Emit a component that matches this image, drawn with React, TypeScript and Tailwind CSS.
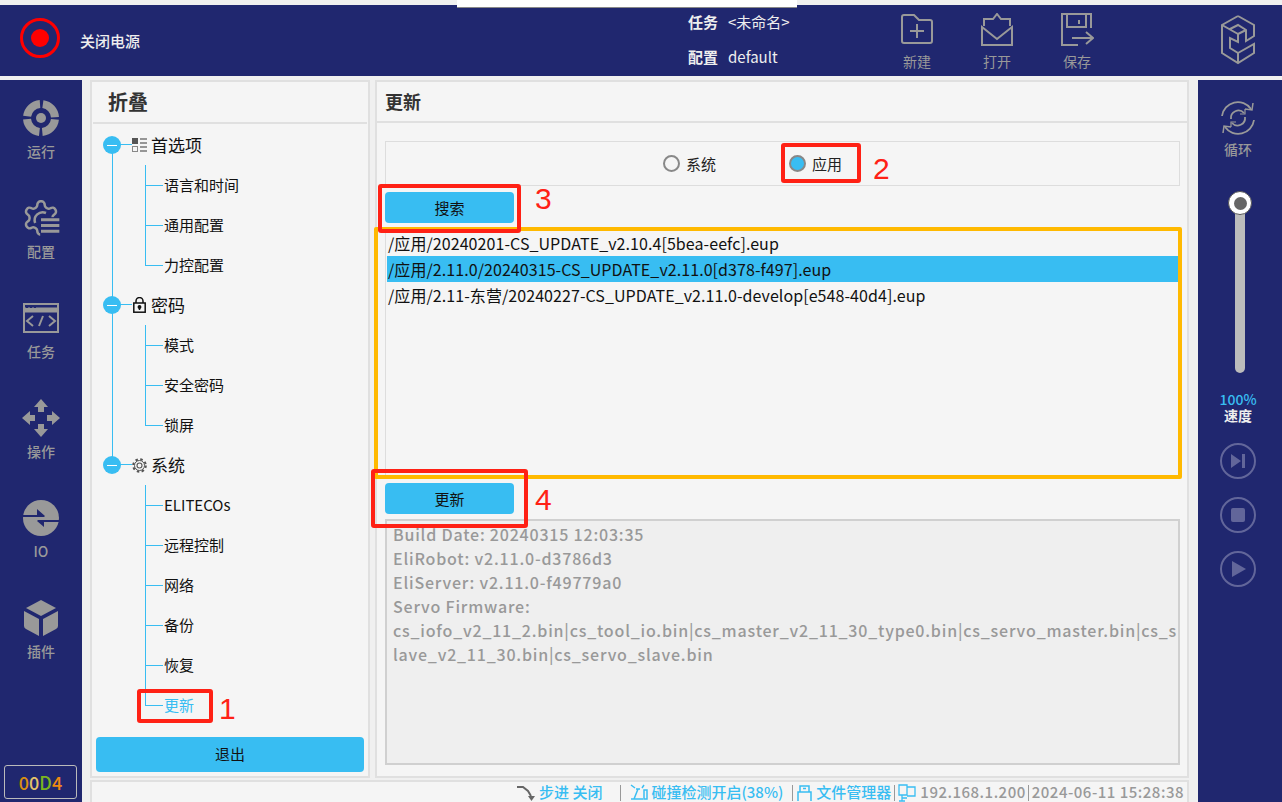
const navy = 'bg-[#20276f]'

const Sun = 'font-["Noto_Sans_CJK_SC",sans-serif]'

const NavIcon = ({ name }: { name: string }) => {
    if (name === 'run') {
        return (
            <svg width="38" height="38" viewBox="0 0 38 38" fill="#999">
                <circle cx="19" cy="19" r="5" />
                <circle cx="19" cy="19" r="14" fill="none" stroke="#999" strokeWidth="8" strokeDasharray="19 3" strokeDashoffset="-1.500" />
            </svg>
        )
    }
    if (name === 'config') {
        return (
            <svg width="40" height="40" viewBox="0 0 24 24" fill="none" stroke="#999" strokeWidth="1.500">
                <path d="M12.220 2h-.44a2 2 0 0 0-2 2v.18a2 2 0 0 1-1 1.730l-.43.25a2 2 0 0 1-2 0l-.15-.08a2 2 0 0 0-2.730.73l-.22.38a2 2 0 0 0 .73 2.730l.15.1a2 2 0 0 1 1 1.720v.51a2 2 0 0 1-1 1.740l-.15.09a2 2 0 0 0-.73 2.730l.22.38a2 2 0 0 0 2.730.73l.15-.08a2 2 0 0 1 2 0l.43.25a2 2 0 0 1 1 1.730V20a2 2 0 0 0 2 2h.44a2 2 0 0 0 2-2v-.18a2 2 0 0 1 1-1.730l.43-.25a2 2 0 0 1 2 0l.15.08a2 2 0 0 0 2.730-.73l.22-.39a2 2 0 0 0-.73-2.730l-.15-.08a2 2 0 0 1-1-1.740v-.5a2 2 0 0 1 1-1.740l.15-.09a2 2 0 0 0 .73-2.730l-.22-.38a2 2 0 0 0-2.730-.73l-.15.08a2 2 0 0 1-2 0l-.43-.25a2 2 0 0 1-1-1.730V4a2 2 0 0 0-2-2z" />
                <rect x="11.500" y="11.500" width="13" height="13" fill="#20276f" stroke="none" />
                <path d="M8.500 15a4.800 4.800 0 0 1 6.500-6" />
                <path d="M12 13h11M12 16.500h11M12 20h11" strokeWidth="1.800" />
            </svg>
        )
    }
    if (name === 'task') {
        return (
            <svg width="36" height="30" viewBox="0 0 36 30" fill="none" stroke="#999" strokeWidth="2">
                <rect x="1" y="1" width="34" height="28" />
                <path d="M1 7h34" strokeWidth="5" />
                <path d="M10 13l-6 5 6 5M26 13l6 5-6 5M20 13l-4 10" />
                <path d="M3 4h2M7 4h2M11 4h2" stroke="#20276f" strokeWidth="2" />
            </svg>
        )
    }
    if (name === 'op') {
        return (
            <svg width="38" height="38" viewBox="0 0 38 38" fill="#999">
                <path d="M19 0l7 8h-4v5h-6V8h-4zM19 38l-7-8h4v-5h6v5h4zM0 19l8-7v4h5v6H8v4zM38 19l-8 7v-4h-5v-6h5v-4z" />
            </svg>
        )
    }
    if (name === 'io') {
        return (
            <svg width="36" height="36" viewBox="0 0 36 36">
                <circle cx="18" cy="18" r="18" fill="#999" />
                <path d="M0 15h14V9l8 7-1 1H0z" fill="#20276f" />
                <path d="M36 20H15l-1 1 7 6v-5h15z" fill="#20276f" />
            </svg>
        )
    }
    return (
        <svg width="36" height="38" viewBox="0 0 36 38" fill="#999">
            <path d="M18 1l15 8-15 8-15-8z" />
            <path d="M1 12l15 8v17L3 30q-2-1-2-3z" />
            <path d="M35 12l-15 8v17l13-7q2-1 2-3z" />
        </svg>
    )
}

const navItems = [
    { name: 'run', label: '运行' },
    { name: 'config', label: '配置' },
    { name: 'task', label: '任务' },
    { name: 'op', label: '操作' },
    { name: 'io', label: 'IO' },
    { name: 'plug', label: '插件' },
]

const LeftNav = () => (
    <div className={`${navy} w-[82px] flex flex-col relative`}>
        <div className="pt-[18px] flex flex-col">
            {navItems.map((v, i) => (
                <div key={i} className="h-[100px] flex flex-col items-center">
                    <div className="h-[40px] w-full flex items-center justify-center"><NavIcon name={v.name} /></div>
                    <div className="text-[14px] font-medium leading-[18px] mt-[4px] text-[#999]">{v.label}</div>
                </div>
            ))}
        </div>
        <div className="mt-auto mb-[3px] ml-[4px] w-[73px] h-[34px] border border-[#bbb] rounded-[3px] flex items-center justify-center text-[18px] font-medium">
            <span className="text-[#d9900f]">0</span>
            <span className="text-[#e5c36a]">0</span>
            <span className="text-[#7ab51d]">D</span>
            <span className="text-[#ee8a10]">4</span>
        </div>
    </div>
)

const ToolIcon = ({ name }: { name: string }) => {
    if (name === 'new') {
        return (
            <svg width="32" height="30" viewBox="0 0 32 30" fill="none" stroke="#999" strokeWidth="2" className="mt-[1px]">
                <path d="M1 27V3q0-2 2-2h10l5 5h11q2 0 2 2v19q0 2-2 2H3q-2 0-2-2z" />
                <path d="M16 10v14M9 17h14" />
            </svg>
        )
    }
    if (name === 'open') {
        return (
            <svg width="32" height="33" viewBox="0 0 32 33" fill="none" stroke="#999" strokeWidth="2">
                <path d="M1 14l15 12 15-12v18H1z" />
                <path d="M3 13V6h9l4-5 4 5h9v7" />
            </svg>
        )
    }
    return (
        <svg width="33" height="33" viewBox="0 0 33 33" fill="none" stroke="#999" strokeWidth="2">
            <path d="M30 15V1H1v31h16" />
            <path d="M6 1v13h19V1" />
            <path d="M18 7v4" />
            <path d="M11 25h21M25 19l7 6-7 6" />
        </svg>
    )
}

const Header = () => (
    <div className={`${navy} mt-[5px] h-[71px] flex items-center relative shrink-0`}>
        <div className="ml-[20px] w-[40px] h-[40px] rounded-full border-[3px] border-[#ff0000] flex items-center justify-center -mt-[5px]">
            <div className="w-[18px] h-[18px] rounded-full bg-[#ff0000]" />
        </div>
        <div className="ml-[20px] text-[15px] font-medium text-[#eee] mt-[1px]">关闭电源</div>
        <div className="ml-[548px] flex flex-col gap-[13px] text-[#eee] -mt-[1px]">
            <div className="flex items-center h-[22px]">
                <span className="text-[15px] font-bold w-[40px]">任务</span>
                <span className="text-[15px]">&lt;未命名&gt;</span>
            </div>
            <div className="flex items-center h-[22px]">
                <span className="text-[15px] font-bold w-[40px]">配置</span>
                <span className="text-[15px]">default</span>
            </div>
        </div>
        <div className="absolute left-[877px] top-[8px] flex">
            {[
                { name: 'new', txt: '新建' },
                { name: 'open', txt: '打开' },
                { name: 'save', txt: '保存' },
            ].map((v, i) => (
                <div key={i} className="w-[80px] flex flex-col items-center">
                    <div className="h-[33px] flex items-start"><ToolIcon name={v.name} /></div>
                    <div className="mt-[6px] text-[14px] leading-[18px] text-[#999]">{v.txt}</div>
                </div>
            ))}
        </div>
        <div className="ml-auto mr-[26px] -mt-[1px]">
            <svg width="36" height="50" viewBox="0 0 36 50" fill="none" stroke="#999" strokeWidth="2">
                <path d="M18 1L2 10v28l16 10 16-10v-9L18 38" />
                <path d="M2 10l16 9v8l-8-4v10l8 5v10M18 1l16 9v11l-8 5V15l-8-5-8 4M18 19l8-4" />
            </svg>
        </div>
    </div>
)

const Dot = () => (
    <div className="absolute left-[11px] top-[11px] w-[18px] h-[18px] rounded-full bg-[#38bdf2] flex items-center justify-center z-10">
        <div className="w-[10px] h-px bg-white" />
    </div>
)

const TreeGroup = ({ icon, txt }: { icon: React.ReactNode; txt: string }) => (
    <div className="h-10 relative flex items-center">
        <Dot />
        <div className="absolute left-[28px] top-[19px] w-[12px] h-px bg-[#38bdf2]" />
        <div className="ml-[37px] w-[20px] flex justify-center">{icon}</div>
        <span className="text-[17px] text-[#111] ml-[2px]">{txt}</span>
    </div>
)

const TreeLeaf = ({ txt, active, last }: { txt: string; active?: boolean; last?: boolean }) => (
    <div className="h-10 relative flex items-center">
        <div className={`absolute left-[53px] top-0 w-px bg-[#38bdf2] ${last ? 'h-[21px]' : 'h-full'}`} />
        <div className="absolute left-[53px] top-[20px] w-[18px] h-px bg-[#38bdf2]" />
        <span className={`ml-[72px] text-[15px] ${active ? 'text-[#38bdf2]' : 'text-[#111]'}`}>{txt}</span>
    </div>
)

const TreePanel = () => (
    <div className="w-[280px] shrink-0 bg-[#f5f5f5] border-2 border-[#e0e0e0] flex flex-col">
        <div className="h-[42px] mx-px border-b-2 border-[#e0e0e0] flex items-center pl-[15px] text-[20px] font-bold text-[#333]">折叠</div>
        <div className="relative pt-[1px]">
            <div className="absolute left-[20px] top-[20px] w-px h-[321px] bg-[#38bdf2]" />
            <TreeGroup
                txt="首选项"
                icon={
                    <svg width="15" height="14" viewBox="0 0 15 14" fill="none">
                        <rect x="0" y="0" width="6" height="6" fill="#555" />
                        <rect x=".5" y="8.500" width="5" height="5" stroke="#888" />
                        <path d="M8 1h7M8 5h7M8 9h7M8 13h7" stroke="#777" strokeWidth="1.500" />
                    </svg>
                }
            />
            <TreeLeaf txt="语言和时间" />
            <TreeLeaf txt="通用配置" />
            <TreeLeaf txt="力控配置" last />
            <TreeGroup
                txt="密码"
                icon={
                    <svg width="13" height="16" viewBox="0 0 13 16" fill="none" stroke="#111" strokeWidth="1.500">
                        <rect x=".8" y="6" width="11.400" height="9.200" />
                        <path d="M3 6V4a3.500 3.500 0 0 1 7 0v2" />
                        <circle cx="6.500" cy="10" r="1.200" fill="#111" />
                        <path d="M6.500 10v3" />
                    </svg>
                }
            />
            <TreeLeaf txt="模式" />
            <TreeLeaf txt="安全密码" />
            <TreeLeaf txt="锁屏" last />
            <TreeGroup
                txt="系统"
                icon={
                    <svg width="15" height="15" viewBox="0 0 15 15" fill="none" stroke="#555" strokeWidth="1.100">
                        <circle cx="7.500" cy="7.500" r="2.500" />
                        <circle cx="7.500" cy="7.500" r="5" strokeWidth="1" />
                        <circle cx="7.500" cy="7.500" r="6.300" strokeDasharray="2.500 2.450" strokeWidth="2" />
                    </svg>
                }
            />
            <TreeLeaf txt="ELITECOs" />
            <TreeLeaf txt="远程控制" />
            <TreeLeaf txt="网络" />
            <TreeLeaf txt="备份" />
            <TreeLeaf txt="恢复" />
            <TreeLeaf txt="更新" active last />
        </div>
        <button className="mt-auto mb-[4px] mx-[4px] h-[35px] rounded-[4px] bg-[#38bdf2] text-[15px] text-[#111]">退出</button>
    </div>
)

const Radio = ({ on, txt }: { on?: boolean; txt: string }) => (
    <div className="flex items-center">
        <div className={`w-[17px] h-[17px] rounded-full border-2 border-[#888] ${on ? 'bg-[#38bdf2]' : 'bg-[#f5f5f5]'}`} />
        <span className="ml-[6px] text-[15px] text-[#222] pt-[2px]">{txt}</span>
    </div>
)

const files = [
    '/应用/20240201-CS_UPDATE_v2.10.4[5bea-eefc].eup',
    '/应用/2.11.0/20240315-CS_UPDATE_v2.11.0[d378-f497].eup',
    '/应用/2.11-东营/20240227-CS_UPDATE_v2.11.0-develop[e548-40d4].eup',
]

const infoLines = [
    'Build Date: 20240315 12:03:35',
    'EliRobot: v2.11.0-d3786d3',
    'EliServer: v2.11.0-f49779a0',
    'Servo Firmware:',
    'cs_iofo_v2_11_2.bin|cs_tool_io.bin|cs_master_v2_11_30_type0.bin|cs_servo_master.bin|cs_s',
    'lave_v2_11_30.bin|cs_servo_slave.bin',
]

const ContentPanel = () => (
    <div className="w-[814px] ml-[5px] bg-[#f5f5f5] border-2 border-[#e0e0e0] flex flex-col">
        <div className="h-[41px] border-b-2 border-[#e0e0e0] flex items-center pl-[8px] text-[18px] font-bold text-[#333]">更新</div>
        <div className="pl-[8px] pr-[7px] pt-[18px] flex flex-col">
            <div className="h-[45px] border border-[#ddd] flex items-center">
                <div className="ml-[277px]"><Radio txt="系统" /></div>
                <div className="ml-[73px]"><Radio on txt="应用" /></div>
            </div>
            <button className="mt-[6px] w-[129px] h-[31px] pt-px rounded-[4px] bg-[#38bdf2] text-[15px] text-[#111]">搜索</button>
            <div className="mt-[5px] h-[250px] border border-[#ddd] pt-px pl-px pr-px">
                {files.map((v, i) => (
                    <div key={i} className={`h-[26px] pl-[1px] flex items-center text-[16px] tracking-[0.07px] whitespace-nowrap text-[#111] ${i === 1 ? 'bg-[#38bdf2]' : ''}`}>{v}</div>
                ))}
            </div>
            <button className="mt-[5px] w-[129px] h-[31px] pt-px rounded-[4px] bg-[#38bdf2] text-[15px] text-[#111]">更新</button>
            <div className="mt-[5px] h-[246px] border-2 border-[#d0d0d0] bg-[#efefef] pl-[6px] pt-px text-[16px] leading-[24px] text-[#999] font-medium tracking-[0.8px] whitespace-nowrap overflow-hidden">
                {infoLines.map((v, i) => (
                    <div key={i}>{v}</div>
                ))}
            </div>
        </div>
    </div>
)

const Sep = () => <div className="w-px h-[16px] bg-[#999]" />

const StatusBar = () => (
    <div className="mt-[2px] h-[22px] w-[1099px] bg-[#f5f5f5] border-t-2 border-l-2 border-r-2 border-[#e0e0e0] flex items-center justify-end text-[15px] font-medium text-[#38bdf2] pr-[3px] pt-px whitespace-nowrap">
        <svg width="18" height="18" viewBox="0 0 18 18" fill="none" stroke="#666" strokeWidth="2">
            <path d="M0 3h6l5 4 3 5" />
            <path d="M11 12h7l-3.500 5z" fill="#666" stroke="none" />
        </svg>
        <span className="ml-[4px]">步进 关闭</span>
        <div className="ml-[18px] mr-[9px]"><Sep /></div>
        <svg width="18" height="17" viewBox="0 0 18 17" fill="none" stroke="#38bdf2" strokeWidth="1.500">
            <path d="M1 1l4 3M14 1l-2 3M1 15h12M4 15l4-10M6 5h4" />
            <rect x="14" y="6" width="3" height="9" />
        </svg>
        <span className="ml-[3px]">碰撞检测开启(38%)</span>
        <div className="ml-[9px] mr-[4px]"><Sep /></div>
        <svg width="15" height="16" viewBox="0 0 15 16" fill="none" stroke="#38bdf2" strokeWidth="1.500">
            <path d="M1 16V7h13v9M3 7V1h9v6M6 3.500h3" />
        </svg>
        <span className="ml-[4px]">文件管理器</span>
        <div className="ml-[3px] mr-[3px]"><Sep /></div>
        <svg width="18" height="18" viewBox="0 0 18 18" fill="none" stroke="#38bdf2" strokeWidth="1.300">
            <path d="M1 1h8v10H1zM9 3h8v9H9M4 11v6M1 17h6M4 14h5" />
        </svg>
        <span className="ml-[4px] text-[#999] tracking-[0.5px]">192.168.1.200</span>
        <div className="ml-[2px] mr-[3px]"><Sep /></div>
        <span className="text-[#999] tracking-[0.5px]">2024-06-11 15:28:38</span>
    </div>
)

const RightBar = () => (
    <div className={`${navy} ml-[9px] w-[84px] flex flex-col items-center pt-[20px]`}>
        <svg width="36" height="36" viewBox="0 0 36 36" fill="none" stroke="#999" strokeWidth="1.800" className="-ml-[4px]">
            <path d="M2 16a16 16 0 0 1 29-7M34 20a16 16 0 0 1-29 7" />
            <path d="M33 3l-1 7-7-1M3 33l1-7 7 1" strokeWidth="1.500" />
            <path d="M11 19a7.500 7.500 0 0 1 13-6M25 17a7.500 7.500 0 0 1-13 6" />
            <path d="M25 9v5h-5M11 27v-5h5" strokeWidth="1.200" />
        </svg>
        <div className="-ml-[4px] mt-[4px] text-[14px] leading-[18px] font-medium text-[#999]">循环</div>
        <div className="relative mt-[37px] w-[10px] h-[178px] rounded-full bg-[#bcbcbc]">
            <div className="absolute -left-[7px] -top-[4px] w-[24px] h-[24px] rounded-full bg-white border border-[#555] flex items-center justify-center">
                <div className="w-[13px] h-[13px] rounded-full bg-[#666]" />
            </div>
        </div>
        <div className="-ml-[4px] mt-[19px] text-[14px] leading-[15px] font-medium text-[#38bdf2]">100%</div>
        <div className="-ml-[4px] text-[14px] leading-[16px] font-bold text-[#eee]">速度</div>
        <div className="-ml-[4px] mt-[20px] flex flex-col gap-[18px]">
            <div className="w-[36px] h-[36px] rounded-full border-2 border-[#62669a] flex items-center justify-center">
                <svg width="16" height="14" viewBox="0 0 16 14" fill="#62669a">
                    <path d="M1 0l10 7-10 7zM12 0h3v14h-3z" />
                </svg>
            </div>
            <div className="w-[36px] h-[36px] rounded-full border-2 border-[#62669a] flex items-center justify-center">
                <div className="w-[14px] h-[14px] rounded-[2px] bg-[#62669a]" />
            </div>
            <div className="w-[36px] h-[36px] rounded-full border-2 border-[#62669a] flex items-center justify-center">
                <svg width="14" height="16" viewBox="0 0 14 16" fill="#62669a" className="ml-[2px]">
                    <path d="M0 0l14 8-14 8z" />
                </svg>
            </div>
        </div>
    </div>
)

const marks = [
    { cls: 'left-[137px] top-[689px] w-[76px] h-[34px]' },
    { cls: 'left-[781px] top-[143px] w-[80px] h-[40px]' },
    { cls: 'left-[378px] top-[184px] w-[143px] h-[49px]' },
    { cls: 'left-[371px] top-[469px] w-[157px] h-[59px]' },
]

const nums = [
    { txt: '1', cls: 'left-[219px] top-[691px]' },
    { txt: '2', cls: 'left-[873px] top-[151px]' },
    { txt: '3', cls: 'left-[535px] top-[181px]' },
    { txt: '4', cls: 'left-[535px] top-[482px]' },
]

const App = () => (
    <div className={`w-[1282px] h-[802px] overflow-hidden relative bg-[#f0f0f0] flex flex-col ${Sun}`}>
        <Header />
        <div className="flex flex-1 mt-[4px] min-h-0">
            <LeftNav />
            <div className="ml-[8px] flex flex-col">
                <div className="flex h-[698px]">
                    <TreePanel />
                    <ContentPanel />
                </div>
                <StatusBar />
            </div>
            <RightBar />
        </div>
        {/* annotations drawn on top of the screen */}
        <div className="absolute left-[457px] top-0 w-[340px] h-[8px] bg-white border-b border-[#888]" />
        <div className="absolute left-[374px] top-[227px] w-[808px] h-[252px] border-[4px] border-[#ffb900] rounded-[2px]" />
        {marks.map((v, i) => (
            <div key={i} className={`absolute ${v.cls} border-[4px] border-[#ff2115] rounded-[3px]`} />
        ))}
        {nums.map((v, i) => (
            <div key={i} className={`absolute ${v.cls} text-[30px] leading-[36px] text-[#ff2115]`} style={{ fontFamily: '"Liberation Sans", sans-serif' }}>{v.txt}</div>
        ))}
    </div>
)

export default App
